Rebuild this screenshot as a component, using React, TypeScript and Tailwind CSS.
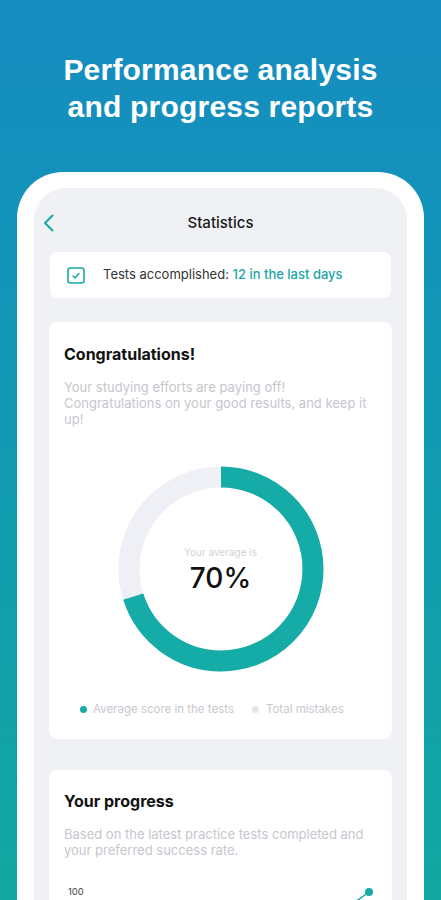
import React from "react";

const app = { fontFamily: "Inter, 'Noto Sans', sans-serif" };

function Donut() {
  const r = 92;
  const c = 2 * Math.PI * r;
  return (
    <div className="relative w-[206px] h-[206px]">
      <svg width="206" height="206" viewBox="0 0 206 206">
        <circle cx="103" cy="103" r={r} fill="none" stroke="#eff0f5" strokeWidth="21" />
        <circle
          cx="103"
          cy="103"
          r={r}
          fill="none"
          stroke="#15aba6"
          strokeWidth="21"
          strokeDasharray={`${c * 0.7} ${c}`}
          transform="rotate(-90 103 103)"
        />
      </svg>
      <div className="absolute inset-0 flex flex-col items-center justify-center pt-[2px]">
        <span className="text-[10px] leading-[12px] text-[#d3d3d8]">Your average is</span>
        <span className="text-[28px] leading-[32px] font-medium text-[#111] mt-[4px]">70%</span>
      </div>
    </div>
  );
}

export default function App() {
  return (
    <div
      className="h-[900px] w-[441px] overflow-hidden flex flex-col items-center bg-gradient-to-b from-[#168cc1] to-[#13a7a0]"
    >
      <h1
        className="pt-[51px] text-center text-white font-bold text-[30px] leading-[37px] tracking-[0.2px]"
        style={{ fontFamily: "'Liberation Sans', Arial, sans-serif" }}
      >
        Performance analysis
        <br />
        and progress reports
      </h1>
      <div className="mt-[47px] w-[407px] h-[800px] shrink-0 bg-white rounded-t-[46px] px-[17px] pt-[16px]">
        <div className="h-full bg-[#f0f1f5] rounded-t-[32px] px-[15px] flex flex-col" style={app}>
          <div className="relative h-[64px] pt-[6px] flex items-center justify-center">
            <svg className="absolute left-[-6px] top-[26px]" width="11" height="18" viewBox="0 0 11 18">
              <path d="M9.5 1.5 L2 9 L9.5 16.5" fill="none" stroke="#17a8a4" strokeWidth="2" strokeLinecap="round" strokeLinejoin="round" />
            </svg>
            <span className="text-[15px] font-medium text-[#1a1a1a]">Statistics</span>
          </div>
          <div className="h-[46px] bg-white rounded-[7px] flex items-center pl-[17px] mx-[1px]">
            <svg width="18" height="17" viewBox="0 0 18 17">
              <rect x="1" y="1" width="16" height="15" rx="2.5" fill="none" stroke="#1aa9a5" strokeWidth="1.6" />
              <path d="M6 9 L8 11 L12 6.5" fill="none" stroke="#1aa9a5" strokeWidth="1.5" strokeLinecap="round" strokeLinejoin="round" />
            </svg>
            <span className="ml-[18px] text-[13px] text-[#333]">
              Tests accomplished: <span className="text-[#21a7a7] font-medium">12 in the last days</span>
            </span>
          </div>
          <div className="mt-[24px] h-[417px] bg-white rounded-[8px] px-[15px] pt-[22px] flex flex-col">
            <div className="text-[16px] leading-[20px] font-bold text-[#111]">Congratulations!</div>
            <p className="mt-[15px] text-[13px] leading-[16px] text-[#c6c6cc]">
              Your studying efforts are paying off! Congratulations on your good results, and keep it up!
            </p>
            <div className="mt-[39px] flex justify-center">
              <Donut />
            </div>
            <div className="mt-[30px] flex items-center pl-[16px] text-[11.5px] leading-[14px] text-[#c8c8ce]">
              <span className="w-[7px] h-[7px] rounded-full bg-[#15aba6]" />
              <span className="ml-[6px]">Average score in the tests</span>
              <span className="ml-[18px] w-[7px] h-[7px] rounded-full bg-[#e6e6ea]" />
              <span className="ml-[7px]">Total mistakes</span>
            </div>
          </div>
          <div className="mt-[31px] flex-1 bg-white rounded-[8px] px-[15px] pt-[21px] flex flex-col">
            <div className="text-[16px] leading-[20px] font-bold text-[#111]">Your progress</div>
            <p className="mt-[15px] text-[13px] leading-[16px] text-[#c6c6cc]">
              Based on the latest practice tests completed and your preferred success rate.
            </p>
            <div className="relative mt-[28px] h-[60px]">
              <div className="pl-[4px] text-[9.5px] leading-[12px] text-[#444]">100</div>
              <svg className="absolute right-[3px] top-0" width="60" height="40" viewBox="0 0 60 40">
                <path d="M55 6 L30 24" stroke="#15aba6" strokeWidth="1.5" fill="none" />
                <circle cx="55" cy="6" r="4" fill="#15aba6" />
              </svg>
            </div>
          </div>
        </div>
      </div>
    </div>
  );
}
